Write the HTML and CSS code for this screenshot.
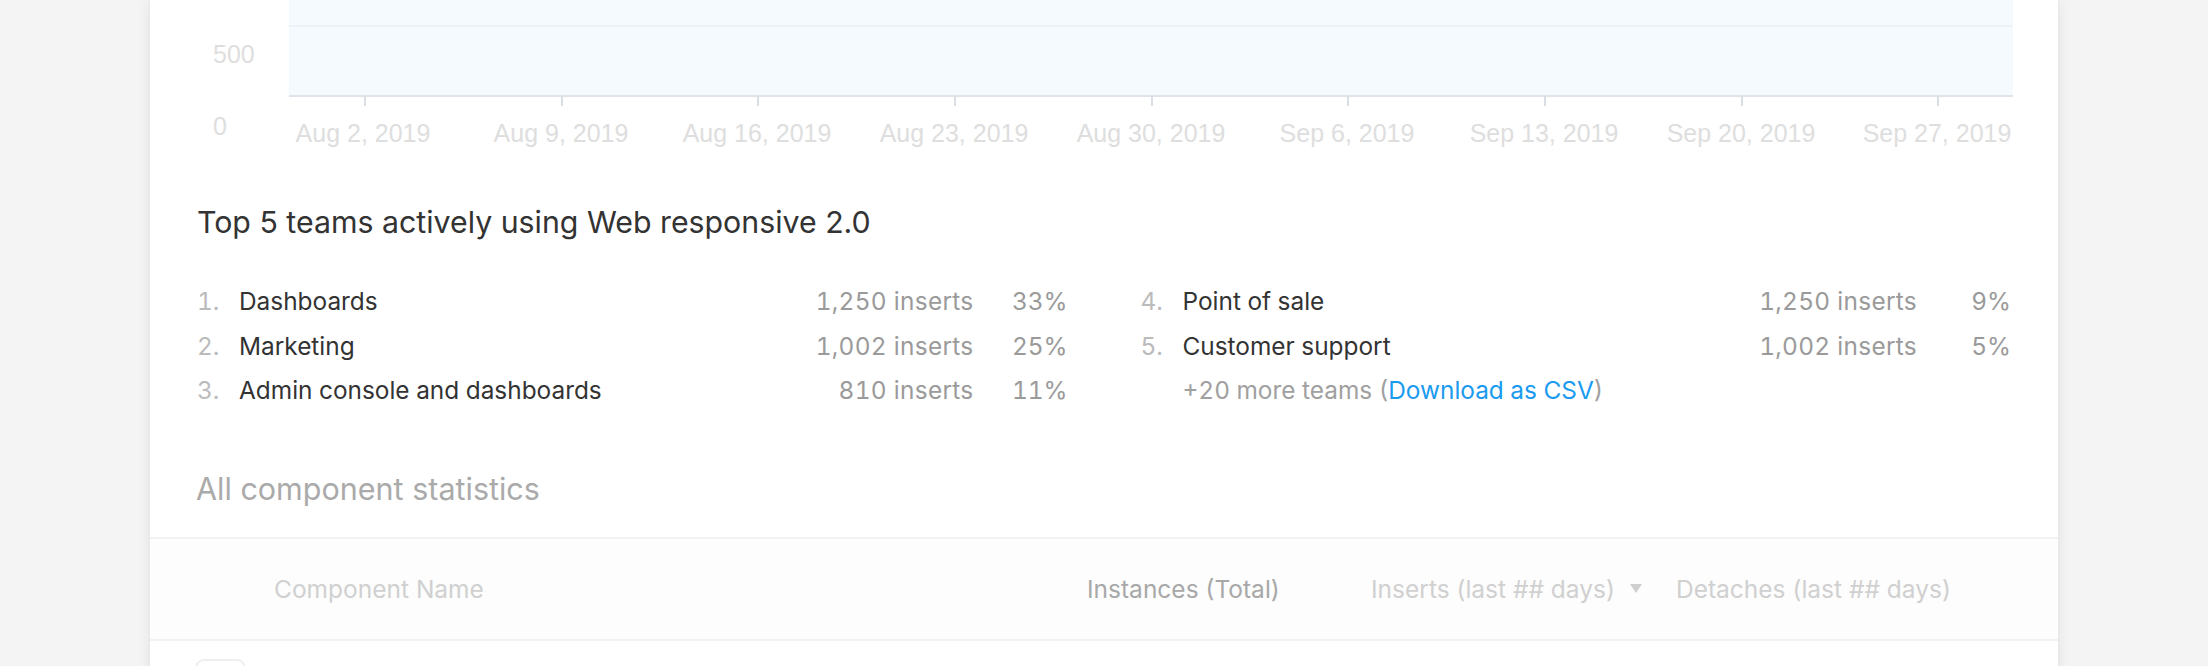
FILE: index.html
```html
<!DOCTYPE html>
<html lang="en">
<head>
<meta charset="utf-8">
<title>Component statistics</title>
<link rel="stylesheet" href="styles.css">
</head>
<body>
<div class="page">
  <main class="card">
    <svg class="chart" width="1908" height="150" viewBox="0 0 1908 150" xmlns="http://www.w3.org/2000/svg">
      <rect x="139" y="0" width="1724" height="96" fill="#f5faff"/>
      <line x1="139" y1="26" x2="1863" y2="26" stroke="#edf2f8" stroke-width="2"/>
      <line x1="139" y1="96" x2="1863" y2="96" stroke="#dfe4ea" stroke-width="2"/>
      <g stroke="#d9dee4" stroke-width="2">
        <line x1="215" y1="96" x2="215" y2="106"/>
        <line x1="412" y1="96" x2="412" y2="106"/>
        <line x1="608" y1="96" x2="608" y2="106"/>
        <line x1="805" y1="96" x2="805" y2="106"/>
        <line x1="1002" y1="96" x2="1002" y2="106"/>
        <line x1="1198" y1="96" x2="1198" y2="106"/>
        <line x1="1395" y1="96" x2="1395" y2="106"/>
        <line x1="1592" y1="96" x2="1592" y2="106"/>
        <line x1="1788" y1="96" x2="1788" y2="106"/>
      </g>
      <g class="axis-text">
        <text x="63" y="63">500</text>
        <text x="63" y="135">0</text>
      </g>
      <g class="axis-text" text-anchor="middle">
        <text x="213" y="142">Aug 2, 2019</text>
        <text x="411" y="142">Aug 9, 2019</text>
        <text x="607" y="142">Aug 16, 2019</text>
        <text x="804" y="142">Aug 23, 2019</text>
        <text x="1001" y="142">Aug 30, 2019</text>
        <text x="1197" y="142">Sep 6, 2019</text>
        <text x="1394" y="142">Sep 13, 2019</text>
        <text x="1591" y="142">Sep 20, 2019</text>
        <text x="1787" y="142">Sep 27, 2019</text>
      </g>
    </svg>

    <section class="teams">
      <h2 class="teams-title">Top 5 teams actively using Web responsive 2.0</h2>
      <div class="team-grid">
        <ol class="team-col">
          <li class="team-row"><span class="num">1.</span><span class="name">Dashboards</span><span class="inserts">1,250 inserts</span><span class="pct">33%</span></li>
          <li class="team-row"><span class="num">2.</span><span class="name">Marketing</span><span class="inserts">1,002 inserts</span><span class="pct">25%</span></li>
          <li class="team-row"><span class="num">3.</span><span class="name">Admin console and dashboards</span><span class="inserts">810 inserts</span><span class="pct">11%</span></li>
        </ol>
        <ol class="team-col">
          <li class="team-row"><span class="num">4.</span><span class="name">Point of sale</span><span class="inserts">1,250 inserts</span><span class="pct">9%</span></li>
          <li class="team-row"><span class="num">5.</span><span class="name">Customer support</span><span class="inserts">1,002 inserts</span><span class="pct">5%</span></li>
          <li class="team-row more"><span class="num"></span><span class="name">+20 more teams (<a class="csv" href="#">Download as CSV</a>)</span></li>
        </ol>
      </div>
    </section>

    <h3 class="stats-title">All component statistics</h3>

    <div class="table-head">
      <span class="col-check"></span>
      <span class="col-name">Component Name</span>
      <span class="col-inst">Instances (Total)</span>
      <span class="col-ins">Inserts (last ## days)<span class="caret"></span></span>
      <span class="col-det">Detaches (last ## days)</span>
    </div>
    <div class="table-row">
      <span class="col-check"><span class="checkbox"></span></span>
    </div>
  </main>
</div>
</body>
</html>
```

FILE: styles.css
```css
* { box-sizing: border-box; }

html, body {
  margin: 0;
  padding: 0;
  background: #f4f4f4;
  height: 100%;
  overflow: hidden;
}

body {
  font-family: Inter, "Noto Sans", sans-serif;
  color: #333;
}

.page {
  padding-left: 150px;
}

.card {
  width: 1908px;
  min-height: 700px;
  background: #fff;
  box-shadow: 0 0 14px rgba(0, 0, 0, 0.08), 0 0 3px rgba(0, 0, 0, 0.04);
}

.chart {
  display: block;
}

.axis-text {
  font-family: "Liberation Sans", Arial, sans-serif;
  font-size: 25px;
  fill: #dedede;
}

.teams {
  padding: 0 47px;
}

.teams-title {
  margin: 57px 0 0;
  font-size: 30.3px;
  line-height: 30px;
  font-weight: 400;
  color: #333;
}

.team-grid {
  display: grid;
  grid-template-columns: 1fr 1fr;
  column-gap: 73px;
  margin-top: 42px;
}

.team-col {
  list-style: none;
  margin: 0;
  padding: 0;
}

.team-row {
  display: flex;
  align-items: baseline;
  font-size: 24.4px;
  line-height: 44.5px;
  font-variant-numeric: tabular-nums;
}

.num {
  width: 42px;
  color: #bbb;
}

.name {
  flex: 1;
  color: #333;
}

.inserts {
  color: #9a9a9a;
  letter-spacing: 0.3px;
}

.pct {
  width: 94px;
  text-align: right;
  color: #9a9a9a;
}

.more .name {
  color: #a0a0a0;
}

.csv {
  color: #1a9bef;
  text-decoration: none;
}

.stats-title {
  margin: 59px 0 0;
  padding-left: 46px;
  font-size: 30.5px;
  line-height: 34px;
  font-weight: 400;
  color: #aaa;
}

.table-head {
  display: grid;
  grid-template-columns: 124px 813px 284px 305px 1fr;
  align-items: center;
  height: 104px;
  margin-top: 31px;
  background: #fdfdfd;
  border-top: 2px solid #f2f2f2;
  border-bottom: 2px solid #f2f2f2;
  font-size: 24.5px;
  color: #d0d0d0;
}

.col-inst {
  color: #a8a8a8;
}

.col-ins {
  display: flex;
  align-items: center;
}

.caret {
  width: 0;
  height: 0;
  margin-left: 15px;
  border-left: 6px solid transparent;
  border-right: 6px solid transparent;
  border-top: 9px solid #cfcfcf;
}

.table-row {
  display: grid;
  grid-template-columns: 124px 1fr;
  padding-top: 18px;
}

.col-check {
  padding-left: 45px;
}

.checkbox {
  display: block;
  width: 51px;
  height: 51px;
  border: 2px solid #eeeeee;
  border-radius: 9px;
}
```
